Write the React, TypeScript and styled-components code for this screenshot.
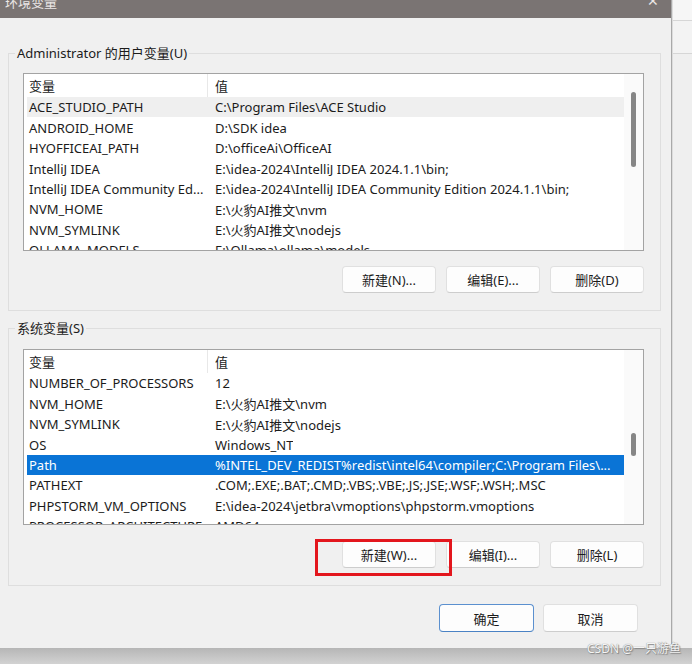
import React from "react"
import styled, { createGlobalStyle } from "styled-components"

interface EnvVar {
  name: string
  value: string
  state?: "hover" | "selected"
}

const userVars: EnvVar[] = [
  { name: "ACE_STUDIO_PATH", value: "C:\\Program Files\\ACE Studio", state: "hover" },
  { name: "ANDROID_HOME", value: "D:\\SDK idea" },
  { name: "HYOFFICEAI_PATH", value: "D:\\officeAi\\OfficeAI" },
  { name: "IntelliJ IDEA", value: "E:\\idea-2024\\IntelliJ IDEA 2024.1.1\\bin;" },
  { name: "IntelliJ IDEA Community Ed...", value: "E:\\idea-2024\\IntelliJ IDEA Community Edition 2024.1.1\\bin;" },
  { name: "NVM_HOME", value: "E:\\火豹AI推文\\nvm" },
  { name: "NVM_SYMLINK", value: "E:\\火豹AI推文\\nodejs" },
  { name: "OLLAMA_MODELS", value: "E:\\Ollama\\ollama\\models" },
]

const systemVars: EnvVar[] = [
  { name: "NUMBER_OF_PROCESSORS", value: "12" },
  { name: "NVM_HOME", value: "E:\\火豹AI推文\\nvm" },
  { name: "NVM_SYMLINK", value: "E:\\火豹AI推文\\nodejs" },
  { name: "OS", value: "Windows_NT" },
  { name: "Path", value: "%INTEL_DEV_REDIST%redist\\intel64\\compiler;C:\\Program Files\\...", state: "selected" },
  { name: "PATHEXT", value: ".COM;.EXE;.BAT;.CMD;.VBS;.VBE;.JS;.JSE;.WSF;.WSH;.MSC" },
  { name: "PHPSTORM_VM_OPTIONS", value: "E:\\idea-2024\\jetbra\\vmoptions\\phpstorm.vmoptions" },
  { name: "PROCESSOR_ARCHITECTURE", value: "AMD64" },
]

const GlobalStyle = createGlobalStyle`
  html, body {
    margin: 0;
    padding: 0;
  }
  body {
    width: 692px;
    height: 664px;
    overflow: hidden;
    background: #f0f0f0;
    font-family: "Noto Sans", "Noto Sans CJK SC", sans-serif;
    color: #1b1b1b;
  }
`

const Screen = styled.div`
  position: relative;
  width: 692px;
  height: 664px;
  display: grid;
  grid-template-columns: 672px 20px;
  grid-template-rows: 648px 16px;
  overflow: hidden;
`

const Dialog = styled.div`
  display: flex;
  flex-direction: column;
  background: #f0f0f0;
  border-right: 1px solid #a9a9a9;
  box-sizing: border-box;
  min-height: 0;
`

const TitleBar = styled.div`
  height: 18px;
  flex: none;
  background: #7a7473;
  display: flex;
  justify-content: space-between;
  align-items: flex-start;
  padding: 0 12px 0 5px;
  overflow: hidden;
  color: #ebe7e6;
  font-size: 13px;
  line-height: 18px;
`

const TitleText = styled.span`
  margin-top: -7px;
`

const CloseGlyph = styled.span`
  margin-top: -8px;
  font-size: 14px;
  font-family: "DejaVu Sans", sans-serif;
  font-weight: 300;
`

const Content = styled.div`
  padding: 26px 10px 0 8px;
  display: flex;
  flex-direction: column;
  gap: 8px;
`

const Group = styled.fieldset<{ $padTop: number }>`
  margin: 0;
  border: 1px solid #dedede;
  padding: ${(p) => p.$padTop}px 16px 17px 14px;
  display: flex;
  flex-direction: column;
  min-width: 0;
`

const GroupTitle = styled.legend`
  padding: 0 2px;
  margin-left: -8px;
  font-size: 13px;
  line-height: 18px;
  color: #1b1b1b;
`

const ListView = styled.div<{ $height: number }>`
  height: ${(p) => p.$height}px;
  box-sizing: border-box;
  border: 1px solid #a3a3a3;
  background: #fff;
  display: flex;
  overflow: hidden;
`

const Table = styled.div`
  flex: 1;
  padding-left: 3px;
  display: flex;
  flex-direction: column;
  overflow: hidden;
  font-size: 13px;
`

const HeaderRow = styled.div`
  height: 23px;
  flex: none;
  display: flex;
  align-items: stretch;
`

const HeaderCell = styled.div<{ $first?: boolean }>`
  display: flex;
  align-items: center;
  box-sizing: border-box;
  width: ${(p) => (p.$first ? "181px" : "auto")};
  padding-left: ${(p) => (p.$first ? "2px" : "7px")};
  border-right: ${(p) => (p.$first ? "1px solid #e8e8e8" : "none")};
`

const Row = styled.div<{ $state?: "hover" | "selected" }>`
  height: 20.45px;
  flex: none;
  display: flex;
  align-items: center;
  white-space: nowrap;
  background: ${(p) =>
    p.$state === "selected" ? "#0a74d6" : p.$state === "hover" ? "#efefef" : "transparent"};
  color: ${(p) => (p.$state === "selected" ? "#fff" : "#1b1b1b")};
`

const NameCell = styled.span`
  width: 181px;
  flex: none;
  box-sizing: border-box;
  padding-left: 2px;
  overflow: hidden;
`

const ValueCell = styled.span`
  padding-left: 7px;
  overflow: hidden;
`

const ScrollTrack = styled.div`
  width: 19px;
  flex: none;
  background: #fafafa;
`

const ScrollThumb = styled.div<{ $top: number; $height: number }>`
  margin: ${(p) => p.$top}px 0 0 7px;
  width: 5px;
  height: ${(p) => p.$height}px;
  border-radius: 3px;
  background: #868686;
`

const ButtonRow = styled.div<{ $gapTop: number }>`
  display: flex;
  justify-content: flex-end;
  gap: 10px;
  margin-top: ${(p) => p.$gapTop}px;
`

const Button = styled.button<{ $default?: boolean }>`
  width: 94px;
  height: 27px;
  box-sizing: border-box;
  border: 1px solid ${(p) => (p.$default ? "#5b90cf" : "#e0e0e0")};
  border-bottom-color: ${(p) => (p.$default ? "#4a82c4" : "#cdcdcd")};
  border-radius: 4px;
  background: #fdfdfd;
  font-family: "Noto Sans", "Noto Sans CJK SC", sans-serif;
  font-size: 13px;
  color: #1b1b1b;
  padding: 0;
`

const Marked = styled.span`
  position: relative;
  display: inline-flex;

  &::after {
    content: "";
    position: absolute;
    inset: -2px -16px -8px -27px;
    border: 3px solid #e3161d;
    pointer-events: none;
  }
`

const Footer = styled.div`
  display: flex;
  justify-content: flex-end;
  gap: 9px;
  padding: 18px 33px 0 0;

  & > button {
    width: 95px;
    height: 28px;
  }
`

const SideStrip = styled.div`
  display: flex;
  flex-direction: column;
  background: #efefef;
  border-left: 1px solid #dcdcdc;
`

const StripPane = styled.div<{ $height: number; $bg: string }>`
  height: ${(p) => p.$height}px;
  background: ${(p) => p.$bg};
  border-bottom: 1px solid #d6d6d6;
`

const ShadowBand = styled.div`
  grid-column: 1 / span 2;
  background: linear-gradient(#b6b6b6, #d2d2d2);
`

const Watermark = styled.div`
  position: absolute;
  right: 11px;
  bottom: 8px;
  font-size: 12px;
  line-height: 14px;
  color: #f5f5f5;
  text-shadow: 0 0 1px #6a6a6a, 1px 1px 1px #8a8a8a;
  font-family: "Noto Sans", "Noto Sans CJK SC", sans-serif;
`

function VarList({ vars, height, thumbTop, thumbHeight }: { vars: EnvVar[]; height: number; thumbTop: number; thumbHeight: number }) {
  return (
    <ListView $height={height}>
      <Table>
        <HeaderRow>
          <HeaderCell $first>变量</HeaderCell>
          <HeaderCell>值</HeaderCell>
        </HeaderRow>
        {vars.map((v, index) => (
          <Row key={index} $state={v.state}>
            <NameCell>{v.name}</NameCell>
            <ValueCell>{v.value}</ValueCell>
          </Row>
        ))}
      </Table>
      <ScrollTrack>
        <ScrollThumb $top={thumbTop} $height={thumbHeight} />
      </ScrollTrack>
    </ListView>
  )
}

export default function App() {
  return (
    <>
      <GlobalStyle />
      <Screen>
        <Dialog>
          <TitleBar>
            <TitleText>环境变量</TitleText>
            <CloseGlyph>✕</CloseGlyph>
          </TitleBar>
          <Content>
            <Group $padTop={11}>
              <GroupTitle>Administrator 的用户变量(U)</GroupTitle>
              <VarList vars={userVars} height={178} thumbTop={18} thumbHeight={75} />
              <ButtonRow $gapTop={15}>
                <Button>新建(N)...</Button>
                <Button>编辑(E)...</Button>
                <Button>删除(D)</Button>
              </ButtonRow>
            </Group>
            <Group $padTop={12}>
              <GroupTitle>系统变量(S)</GroupTitle>
              <VarList vars={systemVars} height={176} thumbTop={83} thumbHeight={23} />
              <ButtonRow $gapTop={16}>
                <Marked>
                  <Button>新建(W)...</Button>
                </Marked>
                <Button>编辑(I)...</Button>
                <Button>删除(L)</Button>
              </ButtonRow>
            </Group>
          </Content>
          <Footer>
            <Button $default>确定</Button>
            <Button>取消</Button>
          </Footer>
        </Dialog>
        <SideStrip>
          <StripPane $height={20} $bg="#f6f6f6" />
          <StripPane $height={32} $bg="#f3f3f3" />
        </SideStrip>
        <ShadowBand />
        <Watermark>CSDN @一只游鱼</Watermark>
      </Screen>
    </>
  )
}
